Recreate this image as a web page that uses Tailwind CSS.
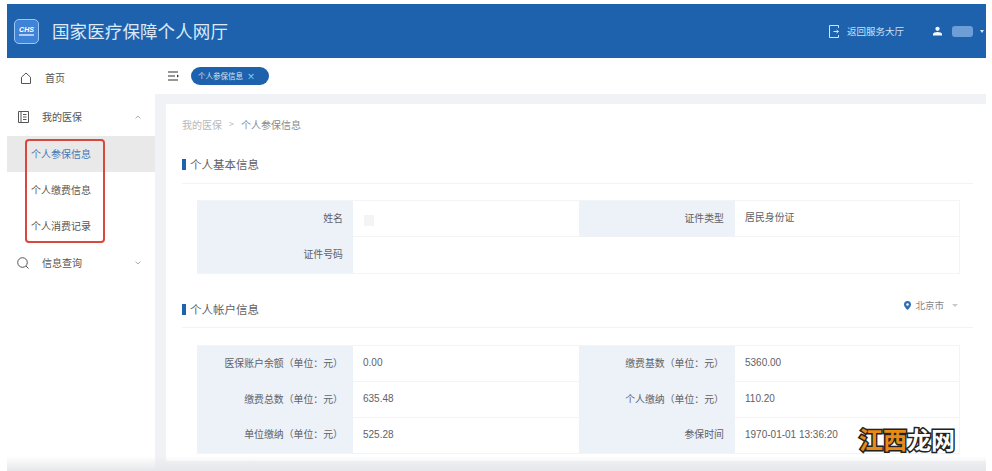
<!DOCTYPE html>
<html lang="zh-CN">
<head>
<meta charset="UTF-8">
<title>国家医疗保障个人网厅</title>
<script src="https://cdn.jsdelivr.net/npm/@tailwindcss/browser@4"></script>
</head>
<body class="bg-white w-[992px] h-[471px] overflow-hidden relative font-['Noto_Sans_CJK_SC','Noto_Sans',sans-serif] text-[#606266]">
  <div class="ml-[7px] mr-[6px] pt-[4px] h-[471px] flex flex-col">
    <!-- top bar -->
    <header class="h-[54px] shrink-0 bg-[#1e62ae] flex items-center text-white">
      <div class="ml-[7px] w-[25px] h-[25px] rounded-[5px] bg-[#3f83d6] border border-[#9cc6f5] flex flex-col items-center justify-center">
        <span class="text-[7px] leading-[7px] font-bold italic font-['Liberation_Sans']">CHS</span>
        <span class="w-[15px] h-[2px] bg-white/60 mt-[1px]"></span>
      </div>
      <h1 class="ml-[13px] text-[17.5px] font-normal text-[#dce9f7] tracking-[0.1px]">国家医疗保障个人网厅</h1>
      <div class="ml-auto flex items-center">
        <svg class="w-[10px] h-[13px]" viewBox="0 0 10 13" fill="none" stroke="#d5e4f5" stroke-width="1">
          <path d="M9.500 3V.5H.5v12h9V10"/><path d="M4.500 6.500h5M7.500 5l2 1.500-2 1.500"/>
        </svg>
        <span class="ml-[8px] text-[9.5px] text-[#cfe0f3]">返回服务大厅</span>
        <svg class="ml-[29px] w-[9px] h-[10px]" viewBox="0 0 10 10" fill="#f4f8fc">
          <circle cx="5" cy="2.600" r="2.400"/><path d="M0 10V8.400C0 6.800 2.500 6 5 6s5 .8 5 2.400V10z"/>
        </svg>
        <span class="ml-[10px] w-[21px] h-[11px] rounded-[3px] bg-[#6d9ed6]"></span>
        <span class="ml-[7px] mr-[2px] w-0 h-0 border-x-[2.500px] border-x-transparent border-t-[3px] border-t-[#dce9f7]"></span>
      </div>
    </header>

    <div class="flex flex-1 min-h-0">
      <!-- side menu -->
      <aside class="w-[148px] shrink-0 bg-white text-[10px] text-[#555] [&>div]:pb-[1px]">
        <div class="h-[40px] flex items-center pl-[13px]">
          <svg class="w-[12px] h-[12px]" viewBox="0 0 12 12" fill="none" stroke="#555" stroke-width="1"><path d="M1.500 11.500V5.200L6 1l4.500 4.200v6.300z"/></svg>
          <span class="ml-[13px]">首页</span>
        </div>
        <div class="h-[38px] flex items-center pl-[11px] pr-[14px]">
          <svg class="w-[11px] h-[12px]" viewBox="0 0 11 12" fill="none" stroke="#555" stroke-width="1"><path d="M.5.5h10v11H.5zM3 .5v11M5 3.500h3.500M5 6h3.500M5 8.500h3.500"/></svg>
          <span class="ml-[13px]">我的医保</span>
          <svg class="ml-auto w-[6px] h-[4px]" viewBox="0 0 6 4" fill="none" stroke="#999" stroke-width=".8"><path d="M.5 3.500 3 1l2.500 2.500"/></svg>
        </div>
        <div class="h-[36px] bg-[#e9e9e9] flex items-center pl-[24px] text-[#3f78b8]">个人参保信息</div>
        <div class="h-[36px] flex items-center pl-[24px]">个人缴费信息</div>
        <div class="h-[36px] flex items-center pl-[24px]">个人消费记录</div>
        <div class="h-[38px] flex items-center pl-[10px] pr-[14px]">
          <svg class="w-[12px] h-[12px]" viewBox="0 0 12 12" fill="none" stroke="#555" stroke-width="1"><circle cx="5.500" cy="5.500" r="4.800"/><path d="m9 9 2.500 2.500"/></svg>
          <span class="ml-[13px]">信息查询</span>
          <svg class="ml-auto w-[6px] h-[4px]" viewBox="0 0 6 4" fill="none" stroke="#999" stroke-width=".8"><path d="M.5.5 3 3 5.500.5"/></svg>
        </div>
      </aside>

      <main class="flex-1 min-w-0 flex flex-col bg-[#f1f2f5]">
        <!-- tab bar -->
        <div class="h-[36px] shrink-0 bg-white flex items-center pl-[13px] pb-[1px]">
          <svg class="w-[11px] h-[10px]" viewBox="0 0 11 10" fill="none" stroke="#333" stroke-width="1.100"><path d="M0 1h10M0 5h7M0 9h10"/><path d="M9 3.500v3L11 5z" fill="#333" stroke="none"/></svg>
          <div class="ml-[12px] h-[18px] w-[78px] rounded-full bg-[#1e62ae] flex items-center pl-[7px] text-[7.500px] text-[#d6e4f4]">
            个人参保信息<span class="ml-[4px] text-[8px]">×</span>
          </div>
        </div>

        <!-- content card -->
        <div class="mt-[10px] ml-[11px] h-[357px] bg-white pl-[16px] pr-[13px] overflow-hidden">
          <div class="mt-[13px] h-[14px] flex items-center text-[10px] text-[#b8b8b8]">
            我的医保<span class="mx-[7px] text-[9px]">&gt;</span><span class="text-[#8a8a8a]">个人参保信息</span>
          </div>

          <div class="mt-[25px] h-[28px] flex items-start border-b border-[#f2f3f5]">
            <span class="mt-[3px] w-[4px] h-[11px] bg-[#1e62ae]"></span>
            <span class="ml-[4px] text-[11.500px] leading-[16px]">个人基本信息</span>
          </div>

          <div class="mt-[16px] ml-[15px] w-[763px] grid grid-cols-[156px_226px_156px_225px] grid-rows-[36px_36px] border-y border-r border-[#f3f4f7] text-[9.900px] [&>div]:pb-[2px]">
            <div class="bg-[#edf1f8] flex items-center justify-end pr-[10px]">姓名</div>
            <div class="flex items-center pl-[11px] pt-[5px] border-b border-[#f3f4f7]"><span class="w-[10px] h-[11px] bg-[#f3f4f6]"></span></div>
            <div class="bg-[#edf1f8] flex items-center justify-end pr-[11px]">证件类型</div>
            <div class="flex items-center pl-[10px] border-b border-[#f3f4f7]">居民身份证</div>
            <div class="bg-[#edf1f8] flex items-center justify-end pr-[10px]">证件号码</div>
            <div class="col-span-3"></div>
          </div>

          <div class="mt-[27px] h-[27px] flex items-start border-b border-[#f2f3f5]">
            <span class="mt-[3px] w-[4px] h-[11px] bg-[#1e62ae]"></span>
            <span class="ml-[4px] text-[11.500px] leading-[16px]">个人帐户信息</span>
            <div class="ml-auto mr-[15px] -mt-[3px] flex items-center text-[9.500px] text-[#888]">
              <svg class="w-[7px] h-[9px]" viewBox="0 0 7 9"><path fill-rule="evenodd" fill="#2f6db5" d="M3.500 0A3.500 3.500 0 0 0 0 3.500C0 6 3.500 9 3.500 9S7 6 7 3.500A3.500 3.500 0 0 0 3.500 0Zm0 2.200a1.300 1.300 0 1 1 0 2.600 1.300 1.300 0 0 1 0-2.600Z"/></svg>
              <span class="ml-[4px]">北京市</span>
              <span class="ml-[8px] w-0 h-0 border-x-[3px] border-x-transparent border-t-[3.500px] border-t-[#c9c9c9]"></span>
            </div>
          </div>

          <div class="mt-[17px] ml-[15px] w-[763px] grid grid-cols-[156px_226px_156px_225px] grid-rows-[36px_36px_35px] border-y border-r border-[#f3f4f7] text-[9.900px] [&>div]:pb-[2px]">
            <div class="bg-[#edf1f8] flex items-center justify-end pr-[10px]">医保账户余额（单位：元）</div>
            <div class="flex items-center pl-[10px] border-b border-[#f3f4f7] font-['Liberation_Sans'] text-[10px]">0.00</div>
            <div class="bg-[#edf1f8] flex items-center justify-end pr-[11px]">缴费基数（单位：元）</div>
            <div class="flex items-center pl-[10px] border-b border-[#f3f4f7] font-['Liberation_Sans'] text-[10px]">5360.00</div>
            <div class="bg-[#edf1f8] flex items-center justify-end pr-[10px]">缴费总数（单位：元）</div>
            <div class="flex items-center pl-[10px] border-b border-[#f3f4f7] font-['Liberation_Sans'] text-[10px]">635.48</div>
            <div class="bg-[#edf1f8] flex items-center justify-end pr-[11px]">个人缴纳（单位：元）</div>
            <div class="flex items-center pl-[10px] border-b border-[#f3f4f7] font-['Liberation_Sans'] text-[10px]">110.20</div>
            <div class="bg-[#edf1f8] flex items-center justify-end pr-[10px]">单位缴纳（单位：元）</div>
            <div class="flex items-center pl-[10px] font-['Liberation_Sans'] text-[10px]">525.28</div>
            <div class="bg-[#edf1f8] flex items-center justify-end pr-[11px]">参保时间</div>
            <div class="flex items-center pl-[10px] font-['Liberation_Sans'] text-[10px]">1970-01-01 13:36:20</div>
          </div>
        </div>
      </main>
    </div>
  </div>

  <!-- soft fade along the bottom edge -->
  <div class="absolute left-[7px] right-[6px] top-[456px] h-[15px] bg-gradient-to-b from-transparent to-[#e6e7ea]"></div>

  <!-- red highlight around the submenu -->
  <div class="absolute left-[25px] top-[139px] w-[80px] h-[104px] rounded-[4px] border-[2px] border-[#d9483b]"></div>

  <!-- watermark -->
  <div class="absolute left-[859px] top-[423px] text-[24px] leading-[32px] font-bold whitespace-nowrap [-webkit-text-stroke:3px_#222] [paint-order:stroke_fill]">
    <span class="text-[#e98a15]">江西</span><span class="text-white">龙网</span>
  </div>
</body>
</html>
